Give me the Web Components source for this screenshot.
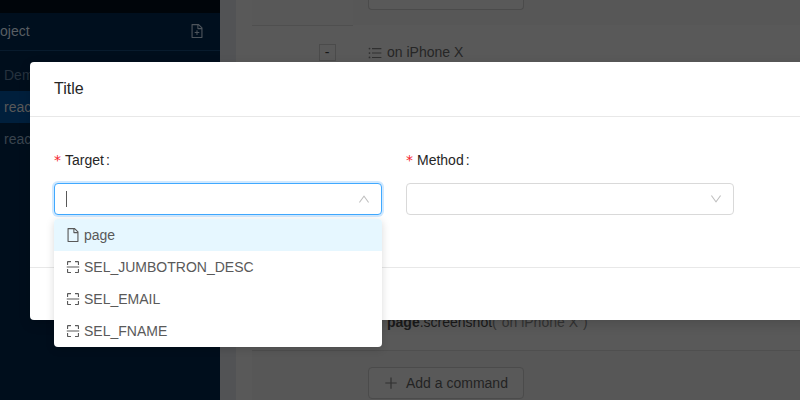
<!DOCTYPE html>
<html lang="en"><head><meta charset="utf-8"><title>Project</title>
<style>
html,body{margin:0;height:400px;overflow:hidden;background:#595959}
body{font:14px/21px "Liberation Sans",Arial,sans-serif;color:#2a2a2a;position:relative}
</style></head><body>
<app-backdrop></app-backdrop>
<modal-dialog heading="Title">
 <form-field label="Target"><select-box open></select-box></form-field>
 <form-field label="Method"><select-box></select-box></form-field>
</modal-dialog>
<script>
const svg=(d,s=14)=>`<svg viewBox="64 64 896 896" width="${s}" height="${s}" fill="currentColor"><path d="${d}"/></svg>`;
const icons={
 file:"M854.6 288.6L639.4 73.4c-6-6-14.1-9.4-22.6-9.4H192c-17.700 0-32 14.300-32 32v832c0 17.700 14.300 32 32 32h640c17.700 0 32-14.300 32-32V311.300c0-8.500-3.400-16.700-9.400-22.700zM790.200 326H602V137.800L790.200 326zm1.800 562H232V136h302v216a42 42 0 0 0 42 42h216v494z",
 fileAdd:"M854.6 288.6L639.4 73.4c-6-6-14.1-9.4-22.6-9.4H192c-17.700 0-32 14.300-32 32v832c0 17.700 14.300 32 32 32h640c17.700 0 32-14.300 32-32V311.300c0-8.500-3.400-16.700-9.400-22.700zM790.200 326H602V137.800L790.200 326zm1.800 562H232V136h302v216a42 42 0 0 0 42 42h216v494zM544 472c0-4.400-3.600-8-8-8h-48c-4.400 0-8 3.600-8 8v108H372c-4.400 0-8 3.600-8 8v48c0 4.400 3.600 8 8 8h108v108c0 4.400 3.600 8 8 8h48c4.400 0 8-3.600 8-8V644h108c4.400 0 8-3.600 8-8v-48c0-4.400-3.600-8-8-8H544V472z",
 scan:"M136 384h56c4.400 0 8-3.600 8-8V200h176c4.400 0 8-3.600 8-8v-56c0-4.400-3.600-8-8-8H196c-37.600 0-68 30.400-68 68v180c0 4.400 3.600 8 8 8zm512-184h176v176c0 4.400 3.600 8 8 8h56c4.400 0 8-3.600 8-8V196c0-37.600-30.400-68-68-68H648c-4.400 0-8 3.600-8 8v56c0 4.400 3.600 8 8 8zM376 824H200V648c0-4.400-3.600-8-8-8h-56c-4.400 0-8 3.600-8 8v180c0 37.600 30.400 68 68 68h180c4.400 0 8-3.600 8-8v-56c0-4.400-3.600-8-8-8zm512-184h-56c-4.400 0-8 3.600-8 8v176H648c-4.400 0-8 3.600-8 8v56c0 4.400 3.600 8 8 8h180c37.600 0 68-30.400 68-68V648c0-4.400-3.600-8-8-8zm16-164H120c-4.400 0-8 3.600-8 8v56c0 4.400 3.600 8 8 8h784c4.400 0 8-3.600 8-8v-56c0-4.400-3.600-8-8-8z",
 list:"M912 192H328c-4.400 0-8 3.600-8 8v56c0 4.400 3.600 8 8 8h584c4.400 0 8-3.600 8-8v-56c0-4.400-3.600-8-8-8zm0 284H328c-4.400 0-8 3.600-8 8v56c0 4.400 3.600 8 8 8h584c4.400 0 8-3.600 8-8v-56c0-4.400-3.600-8-8-8zm0 284H328c-4.400 0-8 3.600-8 8v56c0 4.400 3.600 8 8 8h584c4.400 0 8-3.600 8-8v-56c0-4.400-3.600-8-8-8zM104 228a56 56 0 1 0 112 0 56 56 0 1 0-112 0zm0 284a56 56 0 1 0 112 0 56 56 0 1 0-112 0zm0 284a56 56 0 1 0 112 0 56 56 0 1 0-112 0z",
 plus:"M474 152h76v322h326v76H550v322h-76V550H148v-76h326z",
 down:"M884 256h-75c-5.100 0-9.900 2.500-12.900 6.600L512 654.200 227.900 262.600c-3-4.100-7.800-6.600-12.900-6.600h-75c-6.500 0-10.300 7.400-6.500 12.700l352.600 486.100c12.800 17.600 39 17.600 51.700 0l352.600-486.100c3.900-5.300.1-12.700-6.400-12.700z"};
const define=(name,render)=>customElements.define(name,class extends HTMLElement{
 connectedCallback(){if(!this.shadowRoot)this.attachShadow({mode:'open'}).innerHTML='<style>*{box-sizing:border-box}</style>'+render(this)}
});
define('ui-icon',e=>`<style>:host{display:inline-flex;width:14px;height:14px;flex:none}</style>${svg(icons[e.getAttribute('name')],e.getAttribute('size')||14)}`);
define('side-nav',()=>`<style>
:host{display:block;width:220px;height:400px;background:#000e1c;overflow:hidden;color:#4a525a}
.top{height:13px;background:#00050a}
.head{height:38px;border-bottom:1px solid #081b2d;display:flex;align-items:center;justify-content:space-between;padding:0 16px 1px 0;color:#595e63;background:#000f1e}
ui-icon{color:#4d545b}
.list{padding-top:8px}.row{height:32px;line-height:32px;padding-left:4px;color:#3a444e}
.group{color:#26323e}.on{background:#001f3c;color:#595959}
</style><div class="top"></div><div class="head"><span>oject</span><ui-icon name="fileAdd"></ui-icon></div>
<div class="list"><div class="row group">Dem</div><div class="row on">react</div><div class="row">react</div></div>`);
define('add-button',e=>`<style>:host{box-sizing:border-box;display:flex;width:156px;height:32px;border:1px solid #4b4b4b;border-radius:4px;align-items:center;gap:8px;padding-left:15px;color:#232323;background:#595959}:host([cut]){height:10px;border-top:0;border-radius:0 0 4px 4px}ui-icon{color:#303030}</style>${e.hasAttribute('cut')?'':'<ui-icon name="plus"></ui-icon><span>Add a command</span>'}`);
define('app-backdrop',()=>`<style>
:host{display:grid;grid-template-columns:220px 16px 16px 1fr;height:400px;overflow:hidden}
.gutter{background:#525355}.pad{background:#595959}
.board{background:#575757;display:flex;flex-direction:column;height:400px;overflow:hidden}
.before{height:25px;display:grid;grid-template-columns:101px 1fr;flex:none}
.before add-button{margin-left:15px}.before div:first-child{background:#585858}
.test{height:325px;display:grid;grid-template-columns:101px 1fr;flex:none;background:#595959}
.cell{border-top:1px solid #4f4f4f;display:flex;justify-content:center;align-items:start;padding:18px 0 0 49px}
.toggle{width:17px;height:17px;border:1px solid #4b4b4b;line-height:15px;text-align:center;color:#171717}
.content{padding:17px 0 0 15px;display:flex;flex-direction:column;justify-content:space-between}
.title{display:flex;align-items:center;gap:5px;height:21px;color:#262626}.title ui-icon{color:#303030}
.code{height:21px;margin-bottom:17px;padding-left:19px;color:#333}.code b,.code span{color:#1a1a1a}
.after{border-top:1px solid #4f4f4f;padding:16px 0 0 116px;height:50px;flex:none}
</style><side-nav></side-nav><div class="gutter"></div><div class="pad"></div>
<div class="board"><div class="before"><div></div><add-button cut></add-button></div>
<div class="test"><div class="cell"><div class="toggle">-</div></div><div class="content"><div class="title"><ui-icon name="list"></ui-icon>on iPhone X</div><div class="code"><b>page</b><span>.screenshot</span>(&quot;on iPhone X&quot;)</div></div></div>
<div class="after"><add-button></add-button></div></div>`);
define('form-field',e=>`<style>:host{display:block;width:328px}
.label{height:24px;line-height:24px;margin-bottom:11px;display:flex;color:#262626}
.req{color:#f5222d;font-family:"DejaVu Sans",sans-serif;font-size:14px;margin-right:4px;width:7px}.colon{margin-left:2px}
</style><div class="label"><span class="req">*</span>${e.getAttribute('label')}<span class="colon">:</span></div><slot></slot>`);
define('option-item',e=>`<style>:host{display:flex;box-sizing:border-box;height:32px;align-items:center;padding:0 12px;gap:4px;color:#595959}:host([active]){background:#e6f7ff}</style><ui-icon name="${e.getAttribute('icon')}"></ui-icon><span><slot></slot></span>`);
define('select-box',e=>`<style>
:host{display:block;position:relative}
.box{height:32px;border:1px solid #d9d9d9;border-radius:4px;display:flex;align-items:center;justify-content:space-between;padding:0 11px;background:#fff;color:#bfbfbf}
:host([open]) .box{border-color:#40a9ff;box-shadow:0 0 0 2px rgba(24,144,255,.2)}
:host([open]) ui-icon{transform:rotate(180deg)}
.caret{width:1px;height:16px}
:host([open]) .caret{background:#595959}
.menu{position:absolute;left:0;top:36px;width:328px;height:128px;border-radius:4px;background:#fff;overflow:hidden;box-shadow:0 2px 8px rgba(0,0,0,.15)}
.box ui-icon{width:12px;height:12px}
</style><div class="box"><span class="caret"></span><ui-icon name="down" size="12"></ui-icon></div>
${e.hasAttribute('open')?`<div class="menu"><option-item icon="file" active>page</option-item><option-item icon="scan">SEL_JUMBOTRON_DESC</option-item><option-item icon="scan">SEL_EMAIL</option-item><option-item icon="scan">SEL_FNAME</option-item></div>`:''}`);
define('modal-dialog',e=>`<style>
:host{position:absolute;left:30px;top:62px;width:800px;height:258px;display:flex;flex-direction:column;background:#fff;border-radius:4px;box-shadow:0 4px 12px rgba(0,0,0,.15)}
header{height:55px;flex:none;border-bottom:1px solid #e8e8e8;padding:16px 24px;font-size:16px;line-height:22px;color:#262626}
main{height:150px;padding:31px 24px 0;display:flex;gap:24px}
footer{height:53px;border-top:1px solid #e8e8e8}
</style><header>${e.getAttribute('heading')}</header><main><slot></slot></main><footer></footer>`);
</script></body></html>
